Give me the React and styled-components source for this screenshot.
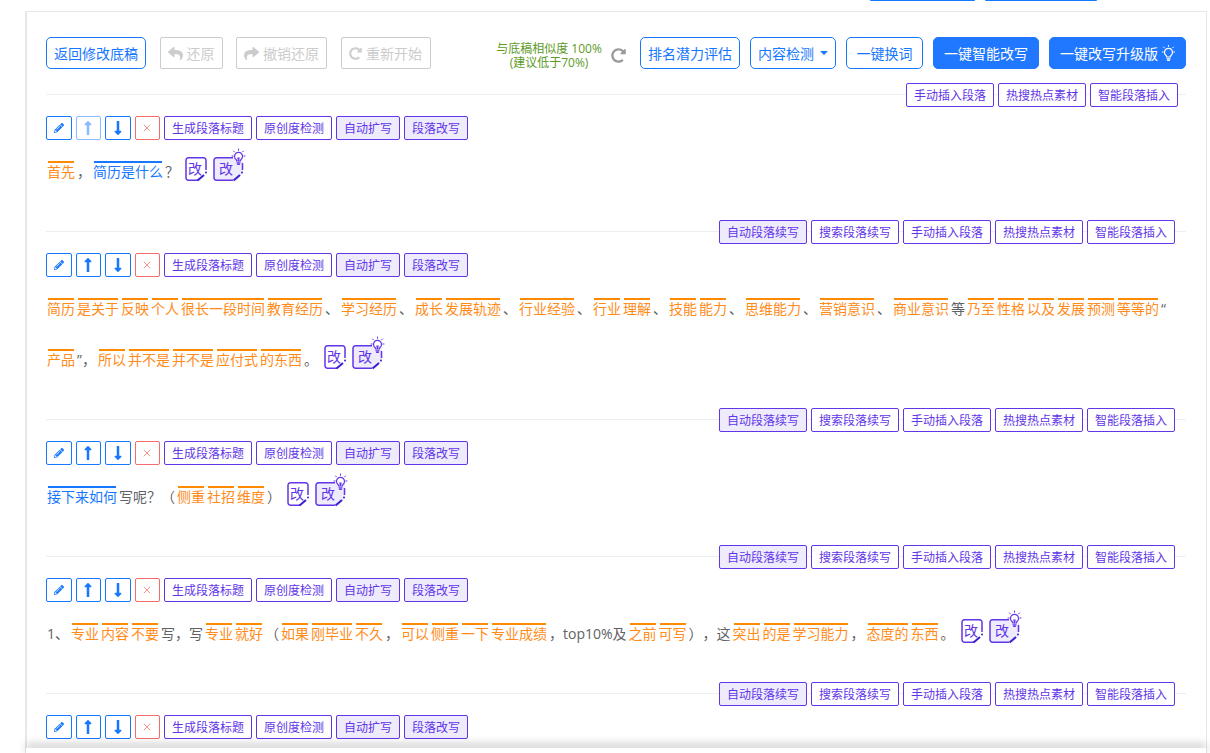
import React from 'react';
import styled, { createGlobalStyle } from 'styled-components';
import {
  FaPencilAlt,
  FaLongArrowAltUp,
  FaLongArrowAltDown,
  FaReply,
  FaShare,
  FaRedoAlt,
} from 'react-icons/fa';
import { X } from 'lucide-react';

const BLUE = '#1677ff';
const PURPLE = '#6236e8';
const TINT = '#eeebfd';

const GlobalStyle = createGlobalStyle`
  html, body {
    margin: 0;
    height: 100%;
    overflow: hidden;
    background: #fff;
    font-family: "Open Sans", "Noto Sans CJK SC", sans-serif;
    font-size: 14px;
    color: #606266;
    text-spacing-trim: space-all;
  }
`;

const TopStrip = styled.div`
  display: flex;
  justify-content: flex-end;
  gap: 10px;
  height: 2px;
  padding-right: 113px;
`;

const StripBar = styled.span`
  width: ${(p) => p.$w}px;
  height: 1px;
  background: ${BLUE};
  border-radius: 0 0 3px 3px;
`;

const Card = styled.main`
  margin: 9px 3px 0 25px;
  padding: 25px 20px 0 19px;
  border: 1px solid #e8e8e8;
  border-left-width: 2px;
  height: 900px;
  box-sizing: border-box;
`;

const Toolbar = styled.div`
  display: flex;
  align-items: center;
  height: 32px;
`;

const LeftGroup = styled.div`
  display: flex;
  gap: 13.5px;
`;

const RightGroup = styled.div`
  display: flex;
  align-items: center;
  gap: 10px;
  margin-left: auto;
`;

const BigButton = styled.button`
  display: flex;
  align-items: center;
  justify-content: center;
  gap: 4px;
  width: ${(p) => p.$w}px;
  height: 32px;
  padding: 0;
  box-sizing: border-box;
  font: inherit;
  border-radius: 5px;
  border: 1px solid ${BLUE};
  background: #fff;
  color: ${BLUE};
`;

const GhostButton = styled(BigButton)`
  border: 1px solid #ccc;
  border-radius: 2px;
  color: #ccc;
`;

const PrimaryButton = styled(BigButton)`
  background: #1f78ff;
  border-color: #1f78ff;
  color: #fff;
`;

const Caret = styled.span`
  width: 0;
  height: 0;
  margin-left: 2px;
  border-left: 4px solid transparent;
  border-right: 4px solid transparent;
  border-top: 4px solid ${BLUE};
`;

const Similarity = styled.div`
  width: 108px;
  margin-top: 6px;
  text-align: center;
  font-size: 12px;
  line-height: 14px;
  color: #5d9a1f;
`;

const RefreshSlot = styled.span`
  display: flex;
  width: 16px;
  margin: 4px 3px 0 -2px;
  color: #999;
`;

const InsertRow = styled.div`
  display: flex;
  justify-content: flex-end;
  gap: 4px;
  height: 24px;
  padding-right: ${(p) => p.$end}px;
  margin-top: ${(p) => p.$top}px;
  background: linear-gradient(#eee, #eee) no-repeat 0 11px / 100% 1px;
`;

const ToolRow = styled.div`
  display: flex;
  gap: 4px;
  margin-top: 9px;
`;

const SmallButton = styled.button`
  display: flex;
  align-items: center;
  justify-content: center;
  height: 24px;
  padding: 0 7px;
  box-sizing: border-box;
  font: inherit;
  font-size: 12px;
  border-radius: 2px;
  border: 1px solid ${PURPLE};
  color: ${PURPLE};
  background: ${(p) => (p.$tint ? TINT : '#fff')};
`;

const IconButton = styled.button`
  display: flex;
  align-items: center;
  justify-content: center;
  width: 25.5px;
  height: 24px;
  padding: 0;
  box-sizing: border-box;
  border-radius: 2px;
  border: 1px solid ${(p) => (p.$danger ? '#f56c6c' : BLUE)};
  color: ${(p) => (p.$danger ? '#f56c6c' : BLUE)};
  background: #fff;
  opacity: ${(p) => (p.$off ? 0.5 : 1)};
`;

const Paragraph = styled.p`
  margin: 6px 0 0;
  min-height: 51px;
  line-height: 51px;
  font-size: 14px;
`;

const tokenColors = { o: '#ff8c1a', b: BLUE, p: '#606266' };
const lineColors = { o: '#ff8a00', b: BLUE };

const Token = styled.span`
  display: inline-block;
  margin: 0 1px;
  padding-top: 1px;
  line-height: 20px;
  color: ${(p) => tokenColors[p.$kind]};
  background: ${(p) =>
    lineColors[p.$kind]
      ? `linear-gradient(${lineColors[p.$kind]}, ${lineColors[p.$kind]}) no-repeat 1px 0 / calc(100% - 2px) 2px`
      : 'none'};
`;

const IconSvg = styled.svg`
  vertical-align: -4px;
  margin-left: ${(p) => p.$left}px;
  overflow: visible;
`;

const Bulb = ({ x = 0, y = 0, color = PURPLE, fill = 'none', stem = 'none' }) => (
  <g transform={`translate(${x} ${y})`} stroke={color} fill="none" strokeLinecap="round">
    <path d="M4 10.500a4 4 0 1 1 5 0c-.5.4-.7.900-.7 1.500H4.700c0-.6-.2-1.100-.7-1.500z" fill={fill} strokeWidth="1.200" />
    <path d="M5.200 8.500h2.600L7 12H6z" fill={stem} stroke="none" />
    <path d="M5 13.800h3M5.600 15.300h1.800" strokeWidth="1.300" />
    <path d="M6.500 0v1.300M1.500 2l.9.900M11.500 2l-.9.900M0 7h1.200M11.800 7H13" strokeWidth="1" />
  </g>
);

const SimpleRewrite = () => (
  <IconSvg $left={5} width="22" height="24" viewBox="0 0 22 24">
    <path d="M13 23.250H3.500A2.500 2.500 0 0 1 1 20.750V3.250A2.500 2.500 0 0 1 3.500 .75H18.500A2.500 2.500 0 0 1 21 3.250V13" fill="none" stroke={PURPLE} strokeWidth="1.500" />
    <text x="10" y="16.500" fontSize="14" textAnchor="middle" fill={PURPLE}>改</text>
    <path d="M12.500 23.500L19 18" stroke="#3a1fd0" strokeWidth="2" />
    <circle cx="21" cy="15.500" r="1" fill="#3a1fd0" />
  </IconSvg>
);

const SmartRewrite = () => (
  <IconSvg $left={6} width="30" height="32" viewBox="0 0 30 32">
    <path d="M21 31.250H3.500A2.500 2.500 0 0 1 1 28.750V11.250A2.500 2.500 0 0 1 3.500 8.750H27.500A2.500 2.500 0 0 1 30 11.250V21V24L24 31.250z" fill={TINT} stroke="none" />
    <path d="M20 31.250H3.500A2.500 2.500 0 0 1 1 28.750V11.250A2.500 2.500 0 0 1 3.500 8.750H20M29.500 14V21" fill="none" stroke={PURPLE} strokeWidth="1.500" />
    <text x="13" y="24.500" fontSize="14" textAnchor="middle" fill={PURPLE}>改</text>
    <path d="M20.500 31.500L27 26" stroke="#3a1fd0" strokeWidth="2" />
    <circle cx="29" cy="23.500" r="1" fill="#3a1fd0" />
    <Bulb x={19} y={0} fill="#fff" stem={PURPLE} />
  </IconSvg>
);

const BottomShade = styled.div`
  position: fixed;
  left: 26px;
  right: 4px;
  bottom: 0;
  height: 5px;
  background: #fff;
  box-shadow: 0 -3px 10px rgba(0, 0, 0, 0.3);
`;

const insertLabels = ['手动插入段落', '热搜热点素材', '智能段落插入'];

const blocks = [
  {
    up: false,
    tokens: [
      ['o', '首先'], ['p', '，'], ['b', '简历是什么'], ['p', '？'],
    ],
  },
  {
    tokens: [
      ['o', '简历'], ['o', '是关于'], ['o', '反映'], ['o', '个人'], ['o', '很长一段时间'], ['o', '教育经历'], ['p', '、'],
      ['o', '学习经历'], ['p', '、'], ['o', '成长'], ['o', '发展轨迹'], ['p', '、'], ['o', '行业经验'], ['p', '、'],
      ['o', '行业'], ['o', '理解'], ['p', '、'], ['o', '技能'], ['o', '能力'], ['p', '、'], ['o', '思维能力'], ['p', '、'],
      ['o', '营销意识'], ['p', '、'], ['o', '商业意识'], ['p', '等'], ['o', '乃至'], ['o', '性格'], ['o', '以及'], ['o', '发展'],
      ['o', '预测'], ['o', '等等的'], ['p', '“'], ['o', '产品'], ['p', '”，'], ['o', '所以'], ['o', '并不是'], ['o', '并不是'],
      ['o', '应付式'], ['o', '的东西'], ['p', '。'],
    ],
  },
  {
    tokens: [
      ['b', '接下来如何'], ['p', '写呢？（'], ['o', '侧重'], ['o', '社招'], ['o', '维度'], ['p', '）'],
    ],
  },
  {
    tokens: [
      ['p', '1、'], ['o', '专业'], ['o', '内容'], ['o', '不要'], ['p', '写，写'], ['o', '专业'], ['o', '就好'], ['p', '（'],
      ['o', '如果'], ['o', '刚毕业'], ['o', '不久'], ['p', '，'], ['o', '可以'], ['o', '侧重'], ['o', '一下'], ['o', '专业成绩'],
      ['p', '，top10%及'], ['o', '之前'], ['o', '可写'], ['p', '），这'], ['o', '突出'], ['o', '的是'], ['o', '学习能力'], ['p', '，'],
      ['o', '态度的'], ['o', '东西'], ['p', '。'],
    ],
  },
  { tokens: [] },
];

const Tools = ({ upOff }) => (
  <ToolRow>
    <IconButton><FaPencilAlt size={10} /></IconButton>
    <IconButton $off={upOff}><FaLongArrowAltUp size={16} /></IconButton>
    <IconButton><FaLongArrowAltDown size={16} /></IconButton>
    <IconButton $danger><X size={12} strokeWidth={1.5} /></IconButton>
    <SmallButton>生成段落标题</SmallButton>
    <SmallButton>原创度检测</SmallButton>
    <SmallButton $tint>自动扩写</SmallButton>
    <SmallButton $tint>段落改写</SmallButton>
  </ToolRow>
);

const App = () => (
  <>
    <GlobalStyle />
    <TopStrip>
      <StripBar $w={105} />
      <StripBar $w={112} />
    </TopStrip>
    <Card>
      <Toolbar>
        <LeftGroup>
          <BigButton $w={100}>返回修改底稿</BigButton>
          <GhostButton $w={63}><FaReply size={15} />还原</GhostButton>
          <GhostButton $w={91}><FaShare size={15} />撤销还原</GhostButton>
          <GhostButton $w={90}><FaRedoAlt size={13} />重新开始</GhostButton>
        </LeftGroup>
        <RightGroup>
          <Similarity>与底稿相似度 100%<br />(建议低于70%)</Similarity>
          <RefreshSlot><FaRedoAlt size={15} /></RefreshSlot>
          <BigButton $w={100}>排名潜力评估</BigButton>
          <BigButton $w={86}>内容检测<Caret /></BigButton>
          <BigButton $w={77}>一键换词</BigButton>
          <PrimaryButton $w={106}>一键智能改写</PrimaryButton>
          <PrimaryButton $w={137}>
            一键改写升级版
            <svg width="13" height="16" viewBox="0 0 13 16"><Bulb color="#fff" /></svg>
          </PrimaryButton>
        </RightGroup>
      </Toolbar>
      {blocks.map((block, i) => (
        <section key={i}>
          <InsertRow $end={i === 0 ? 8 : 11} $top={i === 0 ? 14 : 23}>
            {i > 0 && <SmallButton $tint>自动段落续写</SmallButton>}
            {i > 0 && <SmallButton>搜索段落续写</SmallButton>}
            {insertLabels.map((label) => (
              <SmallButton key={label}>{label}</SmallButton>
            ))}
          </InsertRow>
          <Tools upOff={block.up === false} />
          {block.tokens.length > 0 && (
            <Paragraph>
              {block.tokens.map(([kind, text], j) => (
                <Token key={j} $kind={kind}>{text}</Token>
              ))}
              <SimpleRewrite />
              <SmartRewrite />
            </Paragraph>
          )}
        </section>
      ))}
    </Card>
    <BottomShade />
  </>
);

export default App;
